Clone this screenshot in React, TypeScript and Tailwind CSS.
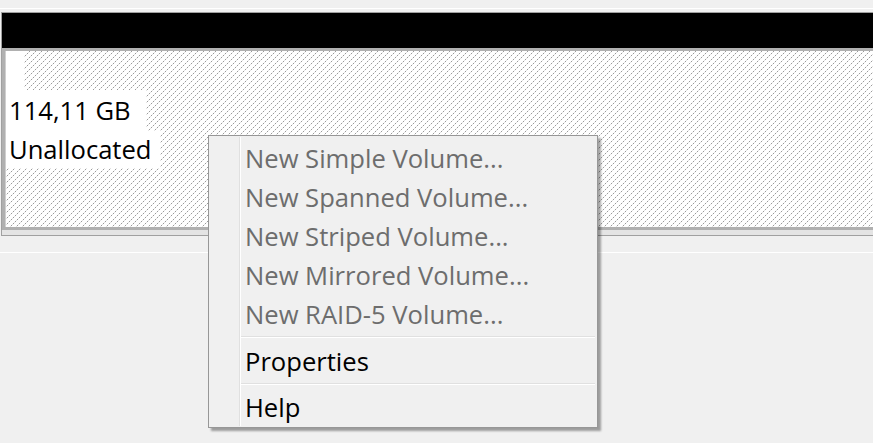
import React from "react";

const Hatch = () => (
  <svg className="absolute inset-0 w-full h-full" xmlns="http://www.w3.org/2000/svg">
    <defs>
      <pattern id="hatch" width="6" height="6" patternUnits="userSpaceOnUse">
        <rect x="0" y="0" width="6" height="6" fill="#ffffff" />
        <rect x="5" y="0" width="1" height="1" fill="#9a9a9a" />
        <rect x="4" y="1" width="1" height="1" fill="#e2e2e2" />
        <rect x="3" y="2" width="1" height="1" fill="#9a9a9a" />
        <rect x="2" y="3" width="1" height="1" fill="#e2e2e2" />
        <rect x="1" y="4" width="1" height="1" fill="#9a9a9a" />
        <rect x="0" y="5" width="1" height="1" fill="#e2e2e2" />
      </pattern>
    </defs>
    <rect width="100%" height="100%" fill="url(#hatch)" />
  </svg>
);

const Item = ({ label, disabled, h = "h-[39px]" }: { label: string; disabled?: boolean; h?: string }) => (
  <div className={`${h} flex items-center pl-[36px] ${disabled ? "text-[#6d6d6d]" : "text-black"}`}>{label}</div>
);

const Sep = () => (
  <div className="h-[8px] pt-[2px] ml-[32px] mr-[2px]">
    <div className="h-px bg-[#e0e0e0]" />
    <div className="h-px bg-white" />
  </div>
);

export default function App() {
  return (
    <div
      className="relative w-[873px] h-[443px] overflow-hidden bg-[#f0f0f0] text-[25.6px] leading-none"
      style={{ fontFamily: '"Open Sans", "Noto Sans", sans-serif' }}
    >
      <div className="h-[8px]" />
      <div className="h-px bg-white" />
      <div className="h-[3px]" />
      <div className="ml-px border-l border-t border-b border-[#a0a0a0]">
        <div className="h-[35px] bg-black" />
        <div className="border-t-[3px] border-l-[3px] border-b-[3px] border-[#b0b0b0]">
          <div className="relative h-[176px] border-l border-[#cfcfcf]">
            <Hatch />
            <div className="relative flex flex-col items-start">
              <div className="w-[18px] h-[39px] bg-white" />
              <div className="w-[140px] h-[41px] bg-white flex items-center pl-[3px]">114,11 GB</div>
              <div className="w-[154px] h-[37px] bg-white flex items-center pl-[3px]">Unallocated</div>
            </div>
          </div>
        </div>
        <div className="h-[5px] bg-[#e4e4e4]" />
      </div>
      <div className="h-[16px]" />
      <div className="h-px bg-white" />

      <div className="absolute left-[208px] top-[135px] w-[390px] border border-[#979797] bg-[#f0f0f0] pt-[3px] shadow-[3px_3px_2px_rgba(0,0,0,0.35)]">
        <div className="absolute left-[30px] top-[1px] bottom-[1px] w-[2px] border-l border-[#e0e0e0] bg-white" />
        <div className="relative">
          <Item label="New Simple Volume..." disabled />
          <Item label="New Spanned Volume..." disabled />
          <Item label="New Striped Volume..." disabled />
          <Item label="New Mirrored Volume..." disabled />
          <Item label="New RAID-5 Volume..." disabled />
          <Sep />
          <Item label="Properties" />
          <Sep />
          <Item label="Help" h="h-[38px]" />
        </div>
      </div>
    </div>
  );
}
